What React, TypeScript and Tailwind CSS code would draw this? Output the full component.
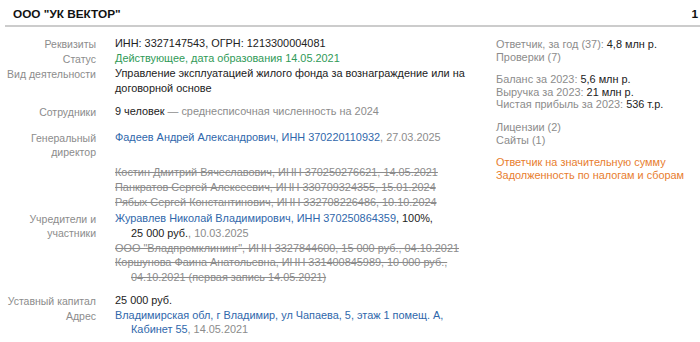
import React from 'react';

const Label = ({ children }: { children: React.ReactNode }) => (
  <div className="w-[96px] shrink-0 text-right text-[10.5px] leading-[14px] text-[#8c8c8c] pt-[1px]">{children}</div>
);

const Row = ({ label, className = '', children }: { label: React.ReactNode; className?: string; children: React.ReactNode }) => (
  <div className={`flex ${className}`}>
    <Label>{label}</Label>
    <div className="ml-[19px] w-[355px] text-[10.9px] leading-[14.7px] text-[#222]">{children}</div>
  </div>
);

const Line = ({ children }: { children: React.ReactNode }) => <div className="pl-4 -indent-4">{children}</div>;

const Old = ({ children }: { children: React.ReactNode }) => (
  <div className="pl-4 -indent-4 text-[#8c8c8c] line-through decoration-[#8c8c8c]">{children}</div>
);

const Link = ({ children }: { children: React.ReactNode }) => <span className="text-[#2f67ab]">{children}</span>;
const Gray = ({ children }: { children: React.ReactNode }) => <span className="text-[#8c8c8c]">{children}</span>;

const Side = ({ label, value }: { label: string; value?: string }) => (
  <div>
    <span className="text-[#8c8c8c]">{label}</span>
    {value && <span className="text-[#222]">{value}</span>}
  </div>
);

export default function App() {
  return (
    <div className="w-[700px] h-[342px] bg-white overflow-hidden font-[family-name:Liberation_Sans,Arial,sans-serif]">
      <div className="flex justify-between pt-[6px] pl-[8px] pr-[2px] h-[27px] border-b-2 border-[#cccccc] ml-[5px]">
        <div className="text-[11.8px] font-bold text-[#111]">ООО "УК ВЕКТОР"</div>
        <div className="text-[11.8px] font-bold text-[#111]">1</div>
      </div>
      <div className="flex pt-[9px]">
        <div className="w-[470px]">
          <Row label="Реквизиты">ИНН: 3327147543, ОГРН: 1213300004081</Row>
          <Row label="Статус"><span className="text-[#2f9a57]">Действующее, дата образования 14.05.2021</span></Row>
          <Row label="Вид деятельности">Управление эксплуатацией жилого фонда за вознаграждение или на договорной основе</Row>
          <Row label="Сотрудники" className="mt-[9px]">
            9 человек <Gray>— среднесписочная численность на 2024</Gray>
          </Row>
          <Row label={<>Генеральный<br />директор</>} className="mt-[11px]">
            <Line><Link>Фадеев Андрей Александрович, ИНН 370220110932</Link><Gray>, 27.03.2025</Gray></Line>
            <div className="mt-[20px]">
              <Old>Костин Дмитрий Вячеславович, ИНН 370250276621, 14.05.2021</Old>
              <Old>Панкратов Сергей Алексеевич, ИНН 330709324355, 15.01.2024</Old>
              <Old>Рябых Сергей Константинович, ИНН 332708226486, 10.10.2024</Old>
            </div>
          </Row>
          <Row label={<>Учредители и<br />участники</>} className="mt-[2px]">
            <Line>
              <Link>Журавлев Николай Владимирович, ИНН 370250864359</Link>, 100%, 25&nbsp;000&nbsp;руб.<Gray>, 10.03.2025</Gray>
            </Line>
            <Old>ООО "Владпромклининг", ИНН 3327844600, 15&nbsp;000&nbsp;руб., 04.10.2021</Old>
            <Old>Коршунова Фаина Анатольевна, ИНН 331400845989, 10&nbsp;000&nbsp;руб., 04.10.2021 (первая запись 14.05.2021)</Old>
          </Row>
          <Row label="Уставный капитал" className="mt-[8px]">25&nbsp;000 руб.</Row>
          <Row label="Адрес">
            <Line><Link>Владимирская обл, г Владимир, ул Чапаева, 5, этаж 1 помещ. А, Кабинет 55</Link><Gray>, 14.05.2021</Gray></Line>
          </Row>
        </div>
        <div className="ml-[26px] pt-[2px] text-[10.9px] leading-[12.6px] whitespace-nowrap flex flex-col gap-[10px]">
          <div>
            <Side label="Ответчик, за год (37): " value="4,8 млн р." />
            <Side label="Проверки (7)" />
          </div>
          <div>
            <Side label="Баланс за 2023: " value="5,6 млн р." />
            <Side label="Выручка за 2023: " value="21 млн р." />
            <Side label="Чистая прибыль за 2023: " value="536 т.р." />
          </div>
          <div>
            <Side label="Лицензии (2)" />
            <Side label="Сайты (1)" />
          </div>
          <div className="text-[#e87d2e]">
            <div>Ответчик на значительную сумму</div>
            <div>Задолженность по налогам и сборам</div>
          </div>
        </div>
      </div>
    </div>
  );
}
